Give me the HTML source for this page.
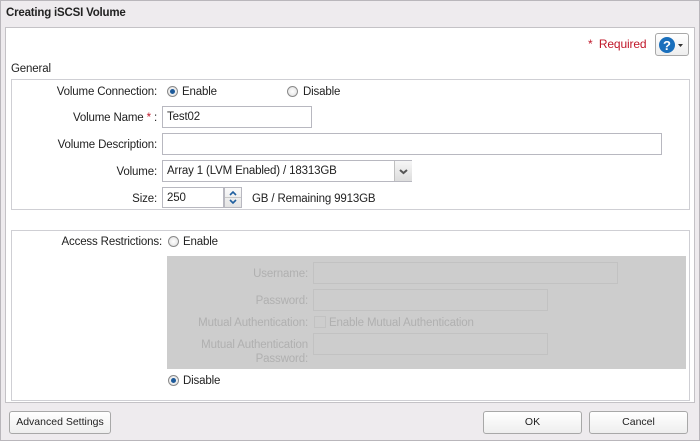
<!DOCTYPE html><html><head><style>
body{margin:0;width:700px;height:441px;background:#eeebee;font-family:"Liberation Sans",sans-serif;font-size:11.5px;letter-spacing:-0.15px;color:#222;position:relative;overflow:hidden}
.a{position:absolute;white-space:nowrap;margin-top:2px}
.r{text-align:right}
.inp{position:absolute;background:#fff;border:1px solid #b8b8c0;box-sizing:border-box;padding:4px 4px 2px;font-size:11.5px}
.rad{position:absolute;width:11px;height:11px;border-radius:50%;border:1px solid #8a8a8a;background:radial-gradient(#fff,#ddd);box-sizing:border-box}
.rad.on::after{content:"";position:absolute;left:2px;top:2px;width:5px;height:5px;border-radius:50%;background:#1d5a9a}
.btn{position:absolute;border:1px solid #a8a8a8;border-radius:3px;background:linear-gradient(#fff,#eee);box-sizing:border-box;text-align:center;font-size:10.5px;line-height:21px;letter-spacing:0}
.box{position:absolute;border:1px solid #cfcfd4;box-sizing:border-box}
.dis{color:#b0b0b0}
.dinp{position:absolute;border:1px solid #c2c2c2;background:#cdcdcd;box-sizing:border-box}
</style></head><body>
<div style="position:absolute;left:0;top:0;width:700px;height:441px;border:1px solid #b9b6bb;box-sizing:border-box"></div>
<div class="a" style="left:6px;top:5px;font-weight:bold;font-size:11.5px;letter-spacing:-0.2px">Creating iSCSI Volume</div>
<div style="position:absolute;left:5px;top:27px;width:690px;height:376px;background:#fff;border:1px solid #c4c2c6;box-sizing:border-box"></div>
<div class="a" style="left:588px;top:35px;color:#c0182a;font-size:12px">*&nbsp; Required</div>
<div class="btn" style="left:655px;top:33px;width:34px;height:23px"><svg width="34" height="21" style="position:absolute;left:0;top:0"><circle cx="11" cy="11" r="8" fill="#1a6fbc"/><text x="11" y="16" text-anchor="middle" font-family="Liberation Sans" font-weight="bold" font-size="13" fill="#fff">?</text><path d="M22 10h5l-2.5 3z" fill="#333"/></svg></div>
<div class="a" style="left:11px;top:61px">General</div>
<div class="box" style="left:11px;top:79px;width:679px;height:131px"></div>
<div class="a r" style="right:543px;top:84px">Volume Connection:</div>
<div class="rad on" style="left:167px;top:86px"></div><div class="a" style="left:182px;top:84px">Enable</div>
<div class="rad" style="left:287px;top:86px"></div><div class="a" style="left:303px;top:84px">Disable</div>
<div class="a r" style="right:543px;top:110px">Volume Name <span style="color:#c0182a">*</span> :</div>
<div class="inp" style="left:162px;top:106px;width:150px;height:22px">Test02</div>
<div class="a r" style="right:543px;top:137px">Volume Description:</div>
<div class="inp" style="left:162px;top:133px;width:500px;height:22px"></div>
<div class="a r" style="right:543px;top:164px">Volume:</div>
<div class="inp" style="left:162px;top:160px;width:250px;height:22px">Array 1 (LVM Enabled) / 18313GB</div>
<div style="position:absolute;left:394px;top:161px;width:17px;height:20px;background:linear-gradient(#f6f6f6,#ddd);border-left:1px solid #c0c0c0"><svg width="17" height="20"><path d="M5 9l3.5 3 3.5-3" stroke="#555" stroke-width="2" fill="none"/></svg></div>
<div class="a r" style="right:543px;top:191px">Size:</div>
<div class="inp" style="left:162px;top:187px;width:62px;height:21px">250</div>
<div style="position:absolute;left:224px;top:187px;width:18px;height:21px;border:1px solid #b8b8c0;box-sizing:border-box;background:linear-gradient(#fafafa,#e4e4e4)"><svg width="16" height="19"><path d="M5 7l3-3 3 3" stroke="#1f5f9f" stroke-width="1.6" fill="none"/><path d="M5 12l3 3 3-3" stroke="#1f5f9f" stroke-width="1.6" fill="none"/><line x1="0" y1="9.5" x2="16" y2="9.5" stroke="#c8c8c8"/></svg></div>
<div class="a" style="left:252px;top:191px">GB / Remaining 9913GB</div>
<div class="box" style="left:11px;top:230px;width:679px;height:171px"></div>
<div class="a r" style="right:538px;top:234px">Access Restrictions:</div>
<div class="rad" style="left:168px;top:236px"></div><div class="a" style="left:183px;top:234px">Enable</div>
<div style="position:absolute;left:167px;top:256px;width:519px;height:113px;background:#cdcdcd"></div>
<div class="a r dis" style="right:392px;top:266px">Username:</div>
<div class="dinp" style="left:313px;top:262px;width:305px;height:22px"></div>
<div class="a r dis" style="right:392px;top:293px">Password:</div>
<div class="dinp" style="left:313px;top:289px;width:235px;height:22px"></div>
<div class="a r dis" style="right:392px;top:315px">Mutual Authentication:</div>
<div class="dinp" style="left:314px;top:316px;width:12px;height:12px"></div>
<div class="a dis" style="left:329px;top:315px">Enable Mutual Authentication</div>
<div class="a r dis" style="right:392px;top:336px;line-height:14px">Mutual Authentication<br>Password:</div>
<div class="dinp" style="left:313px;top:333px;width:235px;height:22px"></div>
<div class="rad on" style="left:168px;top:375px"></div><div class="a" style="left:183px;top:373px">Disable</div>
<div class="btn" style="left:9px;top:411px;width:102px;height:23px">Advanced Settings</div>
<div class="btn" style="left:483px;top:411px;width:99px;height:23px">OK</div>
<div class="btn" style="left:589px;top:411px;width:99px;height:23px">Cancel</div>
</body></html>
